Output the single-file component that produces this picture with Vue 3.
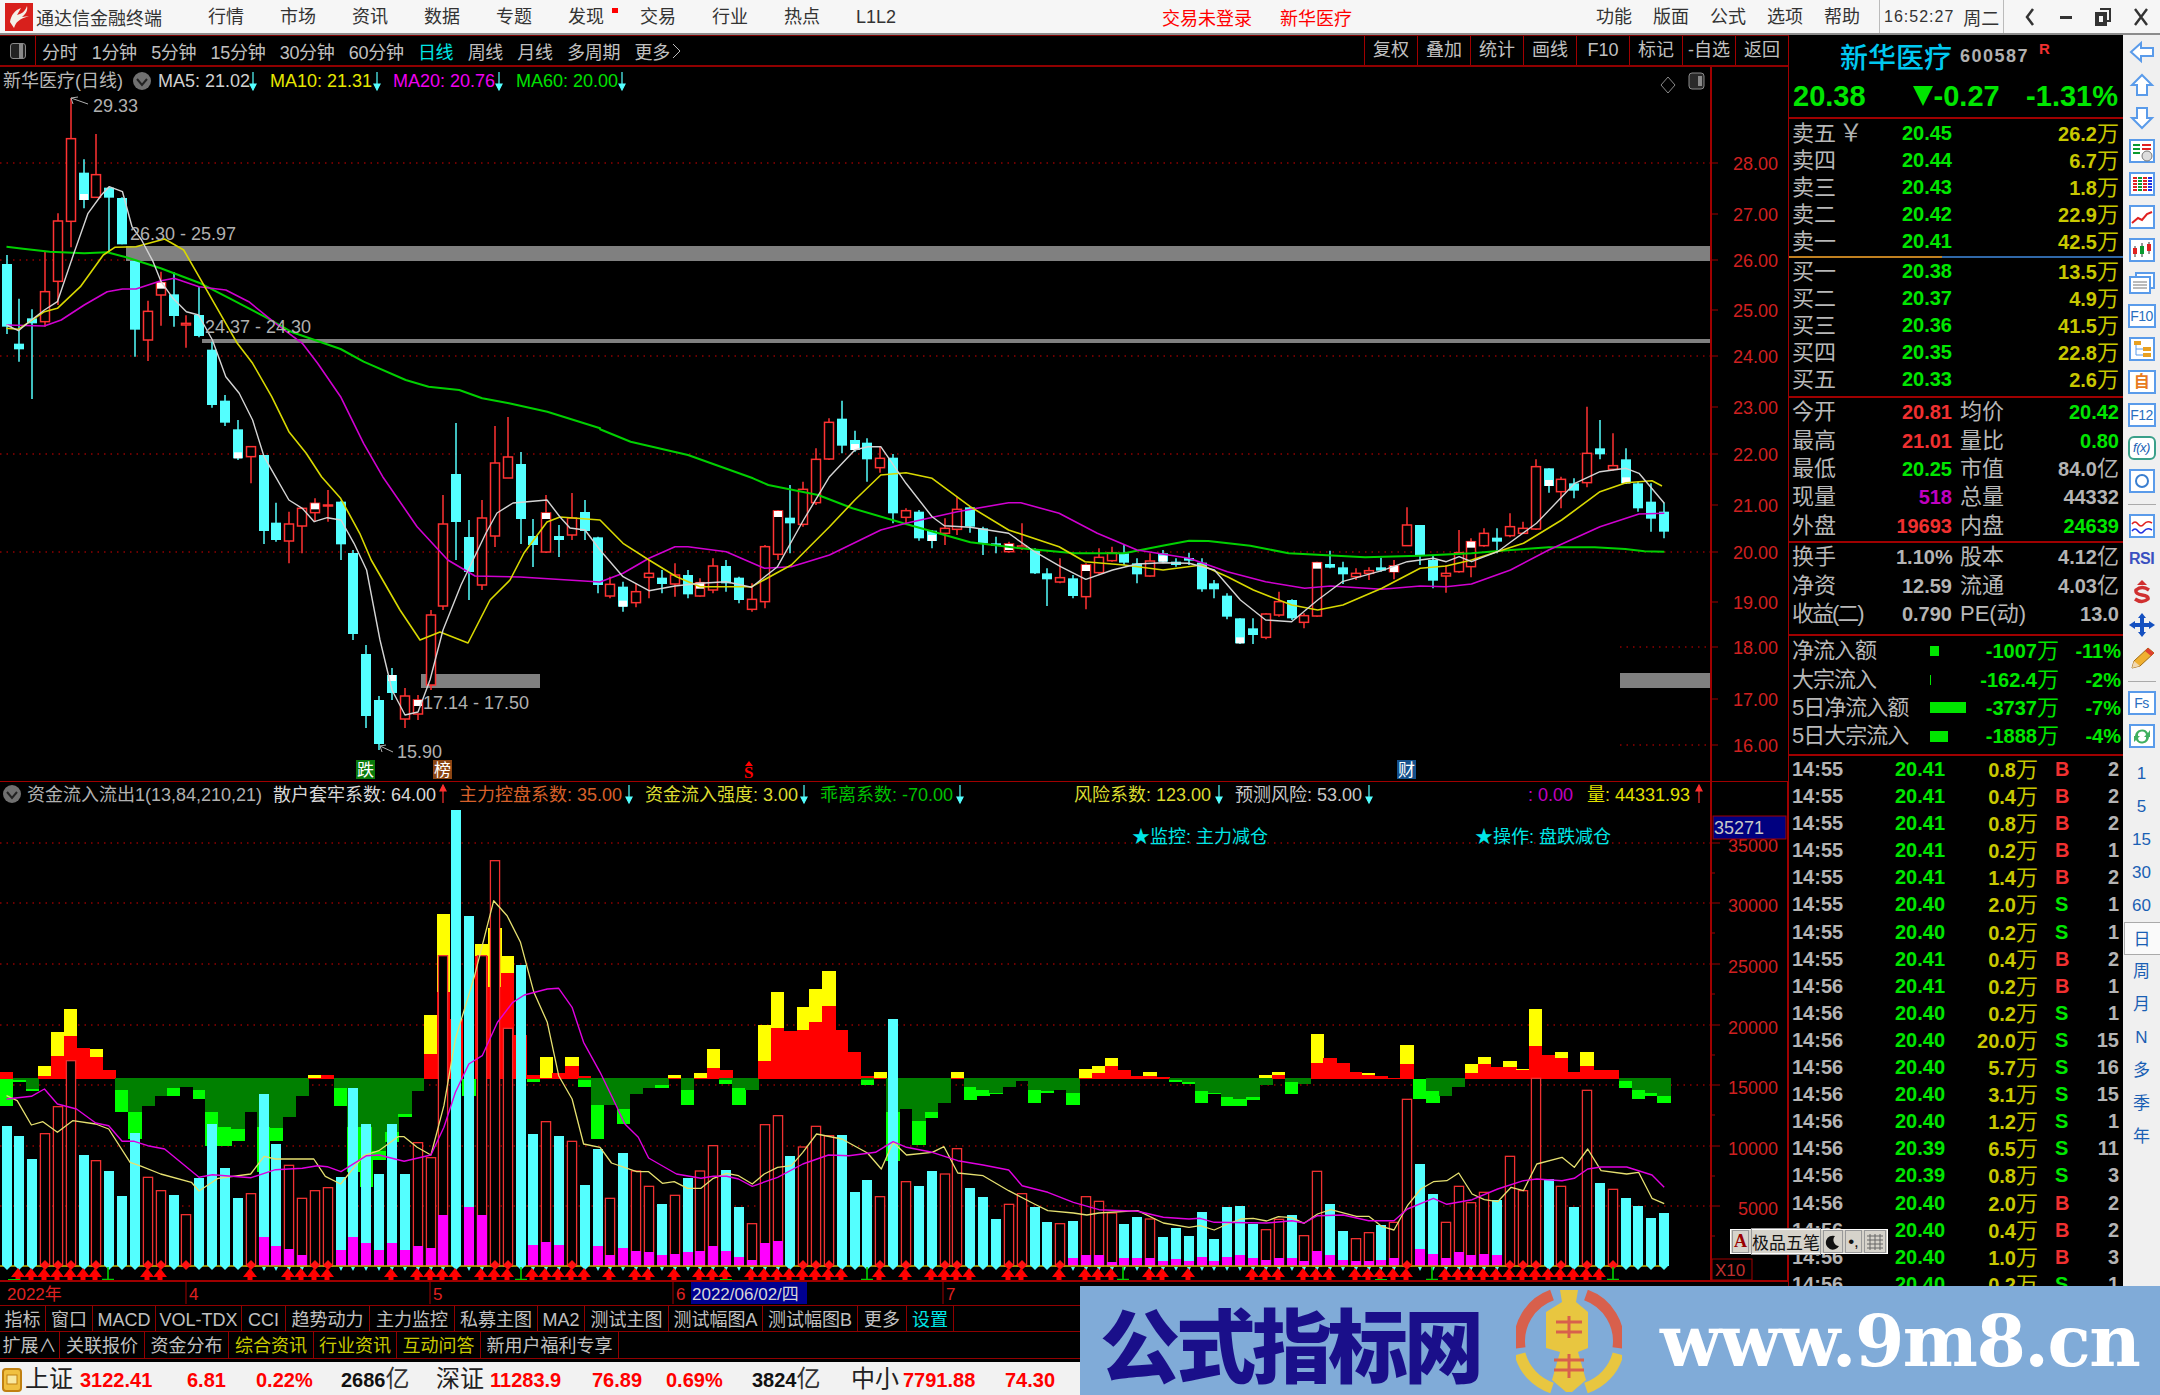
<template>
  <div class="app">
    <div class="menubar">
      <svg class="logo" width="28" height="28" viewBox="0 0 28 28">
        <rect width="28" height="28" fill="#d8201c" />
        <path d="M22 3 C20 9 16 11 12 12 L16 5 C10 7 6 12 5 19 L9 25 C11 19 14 16 24 13 L17 14 C21 11 23 7 22 3 Z" fill="#f4f0e8" />
      </svg>
      <span class="app-title">通达信金融终端</span>
      <nav class="menu">
        <span v-for="m in menu" :key="m" class="menu-item" :class="{ dot: m === '发现' }">{{ m }}</span>
      </nav>
      <div class="login">
        <span>交易未登录</span>
        <span>新华医疗</span>
      </div>
      <nav class="menu right">
        <span v-for="m in menuRight" :key="m" class="menu-item">{{ m }}</span>
      </nav>
      <div class="clock"><span class="time">16:52:27</span><span>周二</span></div>
      <div class="win-btns">
        <svg width="16" height="22" viewBox="0 0 16 22"><path d="M11 3 L5 11 L11 19" fill="none" stroke="#333" stroke-width="2.5" /></svg>
        <svg width="16" height="22" viewBox="0 0 16 22"><rect x="2" y="10" width="12" height="3" fill="#333" /></svg>
        <svg width="18" height="22" viewBox="0 0 18 22"><path d="M6 3 H16 V15 H12 M2 7 H12 V19 H2 Z M4 9 H10 V17 H4 Z" fill="none" stroke="#333" stroke-width="2" /></svg>
        <svg width="18" height="22" viewBox="0 0 18 22"><path d="M3 3 L15 19 M15 3 L3 19" stroke="#333" stroke-width="2.4" /></svg>
      </div>
    </div>

    <div class="body">
      <div class="left">
        <div class="toolbar">
          <span class="tb-icon"><i></i></span>
          <span v-for="t in periods" :key="t" class="period" :class="{ active: t === '日线' }">{{ t }}</span>
          <span class="period more">更多 <svg width="9" height="16" viewBox="0 0 9 16"><path d="M1 1 L8 8 L1 15" fill="none" stroke="#bbb" /></svg></span>
          <span class="spacer"></span>
          <span v-for="t in tools" :key="t" class="tool">{{ t }}</span>
        </div>

        <svg class="chart main-chart" width="1788" height="714" viewBox="0 67 1788 714">
          <line v-for="g in mainGrid" :key="g.y" :x1="g.x" :x2="1710" :y1="g.y" :y2="g.y" class="grid" />
          <rect x="126" y="246" width="1584" height="15" fill="#808080" />
          <rect x="202" y="339" width="1508" height="4" fill="#808080" />
          <rect x="421" y="674" width="119" height="14" fill="#808080" />
          <rect x="1620" y="673" width="90" height="15" fill="#808080" />

          <g v-for="c in candles" :key="c.x">
            <template v-if="c.up">
              <line :x1="c.x" :x2="c.x" :y1="c.high" :y2="c.top" class="wick-r" />
              <line :x1="c.x" :x2="c.x" :y1="c.bot" :y2="c.low" class="wick-r" />
              <rect :x="c.x - 4.5" :y="c.top" width="9" :height="c.h" class="body-r" />
            </template>
            <template v-else>
              <line :x1="c.x" :x2="c.x" :y1="c.high" :y2="c.low" class="wick-c" />
              <rect :x="c.x - 5" :y="c.top" width="10" :height="c.h" class="body-c" />
            </template>
            <rect v-if="c.w" :x="c.x - 4" :y="c.w === 't' ? c.top : c.bot - 6" width="8" height="6" fill="#fff" />
          </g>

          <polyline :points="ma60" class="ln" stroke="#00d000" stroke-width="2" />
          <polyline :points="ma20" class="ln" stroke="#d000d0" stroke-width="1.6" />
          <polyline :points="ma10" class="ln" stroke="#d8d800" stroke-width="1.6" />
          <polyline :points="ma5" class="ln" stroke="#d4d4d4" stroke-width="1.4" />

          <text x="3" y="87" class="t18" fill="#b8b8b8">新华医疗(日线)</text>
          <circle cx="142" cy="81" r="9" fill="#707070" />
          <path d="M137 79 L142 85 L147 79" fill="none" stroke="#222" stroke-width="2" />
          <text v-for="l in mainLegend" :key="l.t" :x="l.x" y="87" class="t18" :fill="l.c">{{ l.t }}</text>
          <path v-for="a in mainArrows" :key="a" :d="arrowDown(a, 72)" class="arr" stroke="#54ffff" fill="#54ffff" />

          <path d="M71 98 L88 104 M71 98 l7 -1 M71 98 l2 6" stroke="#b0b0b0" fill="none" />
          <text x="93" y="112" class="t18" fill="#b0b0b0">29.33</text>
          <text x="130" y="240" class="t18" fill="#b0b0b0">26.30 - 25.97</text>
          <text x="205" y="333" class="t18" fill="#b0b0b0">24.37 - 24.30</text>
          <text x="423" y="709" class="t18" fill="#b0b0b0">17.14 - 17.50</text>
          <path d="M380 746 L393 752 M380 746 l6 -1 M380 746 l2 6" stroke="#b0b0b0" fill="none" />
          <text x="397" y="758" class="t18" fill="#b0b0b0">15.90</text>

          <path d="M1668 77 L1675 85 L1668 93 L1661 85 Z" fill="none" stroke="#8a8a8a" />
          <rect x="1689" y="73" width="15" height="16" rx="3" fill="#2a2a2a" stroke="#8a8a8a" />
          <rect x="1698" y="76" width="4" height="10" fill="#8a8a8a" />

          <rect x="356" y="760" width="19" height="19" fill="#0a7a0a" />
          <text x="357" y="776" class="t17" fill="#fff">跌</text>
          <rect x="433" y="760" width="19" height="19" fill="#8b4513" />
          <text x="434" y="776" class="t17" fill="#fff">榜</text>
          <path d="M749 761 L753 766 H745 Z" fill="#f00" />
          <text x="744" y="778" class="t15b" fill="#f00">S</text>
          <rect x="1397" y="760" width="19" height="19" fill="#14508c" />
          <text x="1398" y="776" class="t17" fill="#fff">财</text>

          <line x1="1711" x2="1711" y1="67" y2="781" class="axis" />
          <g v-for="a in mainAxis" :key="a.t">
            <line x1="1711" x2="1718" :y1="a.tick" :y2="a.tick" stroke="#a00000" />
            <text x="1778" :y="a.y + 7" text-anchor="end" class="t18" fill="#d02020">{{ a.t }}</text>
          </g>
        </svg>

        <svg class="chart ind-chart" width="1788" height="501" viewBox="0 782 1788 501">
          <line x1="0" x2="1788" y1="782" y2="782" stroke="#a00000" stroke-width="2" />
          <line v-for="y in volGrid" :key="y" x1="0" x2="1710" :y1="y" :y2="y" class="grid" />

          <g v-for="(r, i) in flowRects" :key="'f' + i">
            <rect :x="r.x" :y="r.y" width="13.4" :height="r.h" :fill="r.c" shape-rendering="crispEdges" />
          </g>
          <g v-for="b in volBars" :key="b.x">
            <rect v-if="b.up" :x="b.x - 4.6" :y="b.top" width="9.2" :height="1267 - b.top" class="vol-r" />
            <rect v-else :x="b.x - 5" :y="b.top" width="10.2" :height="1267 - b.top" fill="#54ffff" shape-rendering="crispEdges" />
            <rect v-if="b.m" :x="b.x - 5" :y="b.m" width="10.2" :height="1267 - b.m" fill="#ff00ff" shape-rendering="crispEdges" />
          </g>
          <polyline :points="volYellow" class="ln" stroke="#e6e070" stroke-width="1.3" />
          <polyline :points="volMagenta" class="ln" stroke="#e000e0" stroke-width="1.4" />

          <line x1="0" x2="1664" y1="1267" y2="1267" stroke="#c8b400" stroke-width="1.5" />
          <g v-for="b in volBars" :key="'d' + b.x">
            <path v-if="!b.m" :d="`M${b.x} 1261 l5 5 l-5 5 l-5 -5 Z`" :fill="b.up ? '#ff1010' : '#54ffff'" />
            <path v-else :d="`M${b.x - 2} 1268 h4 l-2 4 Z`" fill="#54ffff" />
          </g>
          <path v-for="a in upArrows" :key="a" :d="`M${a} 1269 l7 9 h-4.5 v3 h-5 v-3 h-4.5 Z`" fill="#ff0000" />
          <path v-for="g in greenTees" :key="g" :d="`M${g} 1268 v12 M${g - 6} 1280.5 h12`" stroke="#00d000" stroke-width="1.6" fill="none" />
          <line v-for="g in greenFlats" :key="g" :x1="g - 6" :x2="g + 6" y1="1281" y2="1281" stroke="#00d000" stroke-width="2" />

          <circle cx="12" cy="795" r="9" fill="#707070" />
          <path d="M7 793 L12 799 L17 793" fill="none" stroke="#222" stroke-width="2" />
          <text v-for="l in indLegend" :key="l.t" :x="l.x" y="802" class="t18" :fill="l.c">{{ l.t }}</text>
          <template v-for="a in indArrows" :key="a.x">
            <path :d="a.up ? arrowUp(a.x, 786) : arrowDown(a.x, 786)" class="arr" :stroke="a.c" :fill="a.c" />
          </template>
          <text x="1132" y="844" class="t18" fill="#00e6e6">★监控: 主力减仓</text>
          <text x="1475" y="844" class="t18" fill="#00e6e6">★操作: 盘跌减仓</text>

          <line x1="1711" x2="1711" y1="782" y2="1283" class="axis" />
          <line x1="1788" x2="1788" y1="782" y2="1283" class="axis" />
          <g v-for="a in volAxis" :key="a.t">
            <line x1="1711" x2="1720" :y1="a.y" :y2="a.y" stroke="#a00000" />
            <line x1="1711" x2="1715" :y1="a.y + 30" :y2="a.y + 30" stroke="#a00000" />
            <text x="1778" :y="a.y + 9" text-anchor="end" class="t18" fill="#d02020">{{ a.t }}</text>
          </g>
          <rect x="1713" y="817" width="73" height="23" fill="#000080" stroke="#a00000" />
          <text x="1714" y="835" class="t18" fill="#c8c8c8">35271</text>
          <rect x="1712" y="1260" width="40" height="21" fill="none" stroke="#a00000" />
          <text x="1715" y="1277" class="t17" fill="#c03030">X10</text>
          <line x1="0" x2="1788" y1="1282" y2="1282" stroke="#a00000" stroke-width="2" />
        </svg>

        <svg class="chart date-axis" width="1788" height="23" viewBox="0 1283 1788 23">
          <text x="7" y="1301" class="t17" fill="#e02020">2022年</text>
          <g v-for="d in dateMarks" :key="d.t">
            <line :x1="d.x" :x2="d.x" y1="1283" y2="1305" stroke="#a00000" />
            <text :x="d.x + 3" y="1301" class="t17" fill="#e02020">{{ d.t }}</text>
          </g>
          <rect x="691" y="1283" width="116" height="22" fill="#000090" />
          <text x="692" y="1301" class="t17" fill="#d8d8d8">2022/06/02/四</text>
        </svg>

        <div class="tabs">
          <span v-for="t in tabsOne" :key="t.t" class="tab" :class="t.c" :style="{ width: t.w + 'px' }">{{ t.t }}</span>
        </div>
        <div class="tabs second">
          <span v-for="t in tabsTwo" :key="t.t" class="tab" :class="t.c" :style="{ width: t.w + 'px' }">{{ t.t }}</span>
        </div>
      </div>

      <div class="quote">
        <div class="q-head">
          <div class="q-name">
            <b>新华医疗</b><span class="q-code">600587</span><sup>R</sup>
          </div>
          <div class="q-price">
            <span>20.38</span>
            <span class="q-chg"><svg width="20" height="22" viewBox="0 0 20 22"><path d="M0 1 H20 L10 21 Z" fill="#00e600" /></svg>-0.27</span>
            <span>-1.31%</span>
          </div>
        </div>

        <div class="q-sec sell">
          <div v-for="r in sells" :key="r[0]" class="q-row">
            <span class="cn lbl">{{ r[0] }}</span><span class="n green pr">{{ r[1] }}</span><span class="n olive vol">{{ r[2] }}<em>万</em></span>
          </div>
          <span class="yen">￥</span>
        </div>
        <div class="divider"></div>
        <div class="q-sec buy">
          <div v-for="r in buys" :key="r[0]" class="q-row">
            <span class="cn lbl">{{ r[0] }}</span><span class="n green pr">{{ r[1] }}</span><span class="n olive vol">{{ r[2] }}<em>万</em></span>
          </div>
        </div>

        <div class="q-sec stats">
          <div v-for="r in stats" :key="r[0]" class="s-row">
            <span class="cn">{{ r[0] }}</span><span class="n" :class="r[2]">{{ r[1] }}</span>
            <span class="cn lbl2">{{ r[3] }}</span><span class="n val2" :class="r[5]">{{ r[4] }}<em v-if="r[6]">{{ r[6] }}</em></span>
          </div>
        </div>
        <div class="q-sec stats two">
          <div v-for="r in stats2" :key="r[0]" class="s-row">
            <span class="cn" :class="{ tight: r[0].length > 2 }">{{ r[0] }}</span><span class="n gray">{{ r[1] }}</span>
            <span class="cn lbl2">{{ r[2] }}</span><span class="n val2 gray">{{ r[3] }}<em v-if="r[4]">{{ r[4] }}</em></span>
          </div>
        </div>
        <div class="q-sec flow">
          <div v-for="r in flowRows" :key="r[0]" class="f-row">
            <span class="cn f-lbl">{{ r[0] }}</span>
            <span class="f-track"><i :style="{ width: r[1] + 'px', height: r[2] + 'px' }"></i></span>
            <span class="n green f-val">{{ r[3] }}<em>万</em></span>
            <span class="n green f-pct">{{ r[4] }}</span>
          </div>
        </div>
        <div class="q-sec ticks">
          <div v-for="(r, i) in tickRows" :key="i" class="t-row">
            <span class="n gray t-time">{{ r[0] }}</span>
            <span class="n green t-price">{{ r[1] }}</span>
            <span class="n olive t-vol">{{ r[2] }}<em>万</em></span>
            <span class="n t-side" :class="r[3] === 'B' ? 'red' : 'green'">{{ r[3] }}</span>
            <span class="n gray t-cnt">{{ r[4] }}</span>
          </div>
        </div>
      </div>

      <aside class="sidebar">
        <svg class="ic" viewBox="0 0 28 24"><path d="M3 12 L13 3 V8 H25 V16 H13 V21 Z" fill="#fff" stroke="#5a9bea" stroke-width="2" /></svg>
        <svg class="ic" viewBox="0 0 28 24"><path d="M14 2 L24 12 H19 V22 H9 V12 H4 Z" fill="#fff" stroke="#5a9bea" stroke-width="2" /></svg>
        <svg class="ic" viewBox="0 0 28 24"><path d="M14 22 L24 12 H19 V2 H9 V12 H4 Z" fill="#fff" stroke="#5a9bea" stroke-width="2" /></svg>
        <svg class="ic" viewBox="0 0 28 24"><rect x="2" y="1" width="24" height="22" fill="#fff" stroke="#5a9bea" stroke-width="2" /><path d="M5 6 H12 M5 10 H12 M5 14 H12" stroke="#0a9a30" stroke-width="2" /><path d="M14 6 H23 M14 10 H23" stroke="#e02020" stroke-width="2" /><circle cx="19" cy="17" r="5" fill="#ddd" stroke="#777" /></svg>
        <svg class="ic" viewBox="0 0 28 24"><rect x="2" y="1" width="24" height="22" fill="#fff" stroke="#5a9bea" stroke-width="2" /><path d="M7 5 V19" stroke="#e02020" stroke-width="4" stroke-dasharray="2 1" /><path d="M12 5 V19" stroke="#0a9a30" stroke-width="4" stroke-dasharray="2 1" /><path d="M17 5 V19" stroke="#e02020" stroke-width="4" stroke-dasharray="2 1" /><path d="M22 5 V19" stroke="#2030e0" stroke-width="4" stroke-dasharray="2 1" /></svg>
        <svg class="ic" viewBox="0 0 28 24"><rect x="2" y="1" width="24" height="22" fill="#fff" stroke="#5a9bea" stroke-width="2" /><path d="M4 18 L10 13 L14 15 L19 9 L24 7" fill="none" stroke="#e02020" stroke-width="2" /></svg>
        <svg class="ic" viewBox="0 0 28 24"><rect x="2" y="1" width="24" height="22" fill="#fff" stroke="#5a9bea" stroke-width="2" /><path d="M7 8 V19 M14 5 V19 M21 4 V16" stroke="#333" /><rect x="5" y="10" width="4" height="6" fill="#e02020" /><rect x="12" y="8" width="4" height="8" fill="#0a9a30" /><rect x="19" y="6" width="4" height="7" fill="#e02020" /></svg>
        <svg class="ic" viewBox="0 0 28 24"><rect x="8" y="2" width="18" height="15" fill="#fff" stroke="#5a9bea" stroke-width="2" /><rect x="2" y="6" width="20" height="16" fill="#fff" stroke="#5a9bea" stroke-width="2" /><path d="M5 11 H19 M5 14 H19 M5 17 H19" stroke="#777" /></svg>
        <span class="ib blue">F10</span>
        <svg class="ic" viewBox="0 0 28 24"><rect x="2" y="1" width="24" height="22" fill="#fff" stroke="#5a9bea" stroke-width="2" /><rect x="6" y="4" width="7" height="4" fill="#e8a020" /><rect x="15" y="10" width="8" height="4" fill="#e8a020" /><rect x="15" y="16" width="8" height="4" fill="#e8a020" /><path d="M8 8 V18 H15 M8 12 H15" stroke="#5a9bea" fill="none" /></svg>
        <span class="ib orange">自</span>
        <span class="ib blue">F12</span>
        <span class="ib teal">f(x)</span>
        <svg class="ic" viewBox="0 0 28 24"><rect x="2" y="1" width="24" height="22" fill="#fff" stroke="#5a9bea" stroke-width="2" /><circle cx="14" cy="12" r="6" fill="none" stroke="#3a7fd0" stroke-width="2" /></svg>
        <hr class="sb-sep" />
        <svg class="ic" viewBox="0 0 28 24"><rect x="2" y="1" width="24" height="22" fill="#fff" stroke="#5a9bea" stroke-width="2" /><path d="M4 10 Q7 6 10 10 T16 10 T24 9" fill="none" stroke="#e02020" stroke-width="1.5" /><path d="M4 17 Q7 13 10 17 T16 17 T24 16" fill="none" stroke="#2030e0" stroke-width="1.5" /></svg>
        <span class="ib plain rsi">RSI</span>
        <svg class="ic" viewBox="0 0 28 24"><path d="M14 0 L19 5 H9 Z" fill="#d03030" /><path d="M21 10 Q14 5 8 10 Q7 14 14 15 Q21 16 20 19 Q14 24 7 19" fill="none" stroke="#d03030" stroke-width="3.4" /></svg>
        <svg class="ic" viewBox="0 0 28 24"><path d="M14 0 L18 5 H16 V10 H21 V8 L27 12 L21 16 V14 H16 V19 H18 L14 24 L10 19 H12 V14 H7 V16 L1 12 L7 8 V10 H12 V5 H10 Z" fill="#1450c0" /></svg>
        <svg class="ic" viewBox="0 0 28 24"><path d="M4 22 L6 15 L20 2 L26 7 L12 20 Z" fill="#f0b030" stroke="#a06a10" /><path d="M4 22 L6 15 L12 20 Z" fill="#f0d8b0" /><path d="M20 2 L26 7 L23 10 L17 5 Z" fill="#e04030" /></svg>
        <hr class="sb-sep" />
        <span class="ib blue">Fs</span>
        <svg class="ic" viewBox="0 0 28 24"><rect x="2" y="1" width="24" height="22" fill="#fff" stroke="#5a9bea" stroke-width="2" /><path d="M7 12 A7 7 0 0 1 20 9 L22 6 V13 H16 L18 11 A4 4 0 0 0 10 12 Z M21 13 A7 7 0 0 1 8 16 L6 18 V12 H12 L10 14 A4 4 0 0 0 18 13 Z" fill="#40b060" /></svg>
        <span v-for="n in ['1', '5', '15', '30', '60']" :key="n" class="per">{{ n }}</span>
        <span class="per active">日</span>
        <span v-for="n in ['周', '月', 'N', '多', '季', '年']" :key="n" class="per">{{ n }}</span>
      </aside>
    </div>

    <div class="status">
      <svg class="st-icon" width="20" height="24" viewBox="0 0 20 24"><rect x="1" y="1" width="18" height="22" rx="3" fill="#f0c040" stroke="#c08010" stroke-width="2" /><rect x="5" y="7" width="10" height="9" fill="#f8e8a0" stroke="#c08010" /></svg>
      <span v-for="(s, i) in statusCells" :key="i" class="st-cell" :class="s[2]" :style="{ width: s[1] + 'px' }">{{ s[0] }}<em v-if="s[3]">{{ s[3] }}</em></span>
    </div>

    <div class="ime">
      <span class="ime-a">A</span>
      <span class="ime-name">极品五笔</span>
      <span class="ime-btn">
        <svg width="18" height="18" viewBox="0 0 18 18"><path d="M11 3 A7 7 0 1 0 15 13 A6 6 0 0 1 11 3 Z" fill="#111" /></svg>
      </span>
      <span class="ime-btn small">•,</span>
      <span class="ime-btn">
        <svg width="20" height="18" viewBox="0 0 20 18"><path d="M2 3 H18 M2 7 H18 M2 11 H18 M2 15 H18 M5 1 V17 M10 1 V17 M15 1 V17" stroke="#666" /></svg>
      </span>
    </div>

    <div class="watermark">
      <span class="wm-cn">公式指标网</span>
      <svg class="wm-logo" width="106" height="106" viewBox="0 0 106 106">
        <path d="M4 60 A49 49 0 0 1 36 7" fill="none" stroke="#d8604c" stroke-width="11" />
        <path d="M70 7 A49 49 0 0 1 102 60" fill="none" stroke="#d8604c" stroke-width="11" />
        <path d="M102 66 A49 49 0 0 1 70 100" fill="none" stroke="#e8c640" stroke-width="11" />
        <path d="M4 66 A49 49 0 0 0 36 100" fill="none" stroke="#e8c640" stroke-width="11" />
        <path d="M44 2 H62 L60 14 L72 24 V60 L62 64 L70 92 L56 104 H50 L36 92 L44 64 L30 60 V24 L46 14 Z" fill="#e8c640" />
        <path d="M40 34 H66 M40 44 H66 M53 28 V50 M38 72 H68 M38 82 H68 M53 66 V90" stroke="#d8604c" stroke-width="3" />
      </svg>
      <span class="wm-en">www.9m8.cn</span>
    </div>
  </div>
</template>

<script setup>
const menu = ['行情', '市场', '资讯', '数据', '专题', '发现', '交易', '行业', '热点', 'L1L2']
const menuRight = ['功能', '版面', '公式', '选项', '帮助']
const periods = ['分时', '1分钟', '5分钟', '15分钟', '30分钟', '60分钟', '日线', '周线', '月线', '多周期']
const tools = ['复权', '叠加', '统计', '画线', 'F10', '标记', '-自选', '返回']

const barX = (i) => Math.round(6.5 + 12.85 * i)

// candles: [up, high, top, bottom, low, white mark], read off the chart
const cA = [
  [0, 585, 612, 800, 822], [0, 716, 851, 868, 905], [0, 748, 775, 790, 1017], [1, 575, 695, 785, 800],
  [1, 460, 483, 664, 735], [1, 115, 236, 484, 562], [0, 298, 338, 420, 445, 'b'], [1, 222, 344, 412, 412],
  [0, 380, 383, 413, 575], [0, 412, 414, 553, 553], [0, 600, 603, 809, 890], [1, 722, 754, 840, 903],
  [1, 635, 668, 705, 797, 't'], [0, 637, 703, 768, 800], [1, 766, 790, 795, 863], [0, 680, 765, 828, 832],
  [0, 845, 869, 1035, 1043], [0, 1005, 1022, 1088, 1098], [0, 1080, 1108, 1195, 1200, 'b'], [1, 1160, 1160, 1190, 1270],
  [0, 1185, 1185, 1413, 1452], [0, 1328, 1388, 1440, 1445], [1, 1355, 1392, 1443, 1510], [1, 1345, 1345, 1398, 1480],
  [1, 1315, 1330, 1358, 1385, 't'], [1, 1290, 1335, 1338, 1385], [0, 1322, 1325, 1453, 1500],
]
const cB = [
  [0, 550, 553, 634, 640], [0, 645, 654, 716, 728], [0, 696, 700, 744, 750], [0, 668, 675, 693, 700, 't'],
  [1, 688, 696, 719, 728], [1, 695, 700, 714, 720, 't'], [1, 610, 615, 685, 690], [1, 495, 524, 606, 610],
  [0, 423, 474, 522, 560], [0, 520, 537, 572, 600], [1, 500, 518, 585, 590], [1, 426, 463, 536, 547],
  [1, 417, 457, 478, 478], [0, 452, 464, 519, 544], [0, 519, 536, 545, 567], [1, 495, 513, 552, 553, 't'],
  [0, 525, 536, 540, 557], [1, 493, 518, 535, 540], [0, 500, 512, 531, 540],
]
const cC = [
  [0, 470, 472, 615, 640], [1, 590, 613, 648, 655], [0, 605, 620, 680, 695, 'b'], [1, 610, 635, 668, 682],
  [1, 540, 580, 592, 655], [0, 570, 593, 612, 640], [1, 550, 585, 612, 650], [0, 570, 585, 643, 655],
  [1, 595, 608, 648, 650, 't'], [1, 535, 558, 630, 640], [0, 540, 558, 610, 635], [0, 590, 593, 660, 670],
  [1, 610, 658, 688, 695], [1, 495, 500, 665, 685], [1, 390, 393, 523, 540, 't'], [0, 315, 413, 430, 520],
  [1, 305, 328, 433, 440], [1, 205, 238, 368, 375], [1, 115, 127, 237, 240], [0, 62, 116, 197, 220],
  [0, 152, 180, 210, 215, 'b'], [0, 175, 188, 238, 305], [1, 200, 235, 263, 278], [0, 222, 233, 400, 430],
  [1, 385, 392, 412, 430], [0, 390, 395, 475, 482], [0, 450, 452, 483, 505, 'b'], [1, 415, 445, 460, 495],
  [1, 350, 388, 448, 465], [0, 380, 382, 440, 458], [0, 440, 445, 490, 525], [0, 470, 490, 497, 520],
  [1, 485, 492, 515, 518, 't'], [1, 430, 498, 505, 510], [0, 505, 510, 580, 582], [0, 565, 580, 598, 678],
  [1, 535, 593, 606, 610], [0, 585, 595, 648, 655], [1, 550, 555, 650, 688, 't'], [1, 505, 532, 578, 582],
  [1, 500, 518, 542, 545], [0, 495, 520, 548, 555], [0, 535, 550, 583, 610], [1, 520, 543, 588, 590],
  [0, 510, 520, 545, 550, 'b'], [0, 535, 545, 555, 560], [0, 518, 534, 542, 555], [0, 535, 548, 628, 635],
  [0, 600, 610, 628, 655], [0, 640, 647, 710, 718], [0, 715, 715, 790, 792, 'b'], [0, 715, 745, 765, 792],
  [1, 700, 702, 772, 778], [1, 635, 665, 705, 710], [0, 658, 660, 715, 720], [1, 700, 707, 727, 745],
  [1, 545, 548, 708, 710, 't'], [0, 512, 552, 563, 565], [0, 545, 562, 583, 612], [1, 565, 580, 590, 600],
  [1, 562, 572, 580, 600], [0, 533, 562, 572, 575], [1, 540, 558, 575, 598, 't'], [1, 382, 435, 497, 498],
  [0, 435, 435, 527, 555], [0, 528, 540, 602, 625], [1, 555, 580, 588, 638], [1, 450, 518, 575, 578],
  [1, 475, 485, 560, 592, 't'], [1, 445, 460, 497, 500], [0, 445, 473, 485, 520], [1, 400, 440, 467, 472],
  [1, 425, 445, 460, 462], [1, 238, 260, 447, 450], [0, 265, 265, 318, 338, 'b'], [1, 290, 298, 335, 385],
  [0, 295, 310, 332, 355], [1, 80, 220, 308, 322], [0, 120, 205, 223, 238], [1, 160, 257, 268, 272],
  [0, 205, 238, 310, 312, 'b'], [0, 305, 310, 385, 395], [0, 310, 365, 416, 455], [0, 368, 395, 455, 475],
]
const scaleRow = (row, y0, k) => [row[0], ...row.slice(1, 5).map((v) => y0 + v / k), row[5]]
const candles = [
  ...cA.map((r) => scaleRow(r, 60, 3)),
  ...cB.map((r) => scaleRow(r, 0, 1)),
  ...cC.map((r) => scaleRow(r, 380, 3)),
].map((r, i) => ({
  x: barX(i), up: !!r[0], high: r[1], top: r[2], bot: r[3], low: r[4], h: r[3] - r[2], w: r[5],
}))

// line points, mixed from the three read-outs of the chart
const from7 = (p) => p.map(([x, y]) => [x / 2.613, 60 + y / 3])
const from12 = (p) => p.map(([x, y]) => [600 + x / 1.307, 380 + y / 3])
const pts = (p) => p.map(([x, y]) => `${x.toFixed(1)},${y.toFixed(1)}`).join(' ')

const ma5 = pts([
  ...from7([[17, 795], [48, 812], [82, 780], [116, 750], [150, 725], [190, 590], [230, 460], [265, 405], [285, 380], [320, 395], [345, 500], [370, 540], [400, 605], [421, 665], [452, 715], [487, 755], [519, 765], [555, 840], [590, 950], [625, 1000], [660, 1080], [690, 1190], [720, 1250], [755, 1320], [790, 1345], [821, 1385], [855, 1373], [891, 1380], [925, 1450], [958, 1530]]),
  [380, 640], [392, 690], [405, 715], [418, 712], [430, 680], [443, 630], [461, 585], [486, 533], [497, 513], [513, 503], [547, 500], [560, 517], [570, 528], [585, 530], [600, 550],
  ...from12([[30, 590], [64, 632], [98, 618], [131, 610], [165, 605], [198, 622], [232, 560], [266, 420], [300, 290], [333, 210], [350, 200], [367, 200], [400, 310], [434, 410], [450, 437], [484, 442], [534, 460], [568, 515], [602, 560], [635, 598], [670, 570], [702, 552], [736, 548], [770, 550], [803, 570], [837, 660], [870, 720], [904, 725], [938, 660], [970, 605], [1022, 572], [1055, 545], [1089, 535], [1106, 545], [1123, 530], [1139, 545], [1173, 515], [1224, 430], [1274, 310], [1307, 275], [1341, 265], [1358, 280], [1391, 370]]),
])
const ma10 = pts([
  ...from7([[17, 805], [48, 808], [116, 755], [150, 745], [210, 680], [270, 585], [300, 562], [355, 560], [430, 537], [480, 570], [520, 650], [560, 730], [620, 850], [660, 910], [710, 1010], [755, 1115], [800, 1180], [840, 1250], [890, 1315], [940, 1420], [970, 1500]]),
  [400, 610], [420, 640], [440, 632], [468, 643], [490, 600], [510, 580], [524, 553], [547, 522], [560, 517], [600, 520],
  ...from12([[30, 490], [64, 540], [100, 590], [131, 620], [198, 620], [250, 555], [300, 440], [333, 360], [367, 285], [400, 278], [434, 295], [484, 380], [534, 450], [600, 500], [634, 545], [685, 555], [736, 570], [786, 555], [820, 590], [854, 630], [904, 675], [938, 690], [971, 675], [1022, 625], [1072, 565], [1106, 558], [1139, 540], [1207, 490], [1257, 420], [1307, 335], [1341, 308], [1375, 302], [1388, 318]]),
])
const ma20 = pts([
  ...from7([[17, 795], [116, 798], [160, 780], [220, 735], [280, 695], [320, 687], [355, 687], [421, 662], [455, 655], [520, 680], [590, 690], [650, 725], [720, 790], [790, 850], [830, 910], [890, 1010], [950, 1150], [1000, 1250], [1090, 1400], [1170, 1500]]),
  [475, 576], [520, 577], [600, 582],
  ...from12([[30, 580], [64, 535], [98, 500], [115, 500], [165, 515], [215, 565], [250, 560], [300, 525], [367, 450], [400, 430], [467, 395], [534, 368], [550, 368], [600, 400], [650, 460], [702, 510], [770, 535], [820, 575], [870, 605], [921, 625], [955, 618], [1022, 628], [1072, 618], [1106, 620], [1139, 612], [1190, 570], [1240, 510], [1307, 440], [1358, 402], [1391, 400]]),
])
const ma60 = pts([
  ...from7([[17, 560], [60, 566], [130, 575], [220, 580], [280, 577], [330, 592], [420, 625], [520, 668], [600, 715], [700, 775], [760, 815], [890, 867], [950, 905], [1060, 960], [1120, 980], [1200, 990], [1260, 1015], [1330, 1030], [1430, 1055], [1568, 1105]]),
  ...from12([[0, 148], [40, 185], [115, 225], [200, 295], [220, 315], [285, 345], [330, 385], [400, 432], [484, 487], [550, 505], [620, 520], [685, 520], [735, 497], [770, 482], [795, 483], [850, 497], [900, 520], [1000, 532], [1072, 527], [1139, 520], [1190, 510], [1240, 502], [1300, 502], [1340, 507], [1365, 514], [1391, 515]]),
])

const mainGrid = [
  { y: 163, x: 0 }, { y: 260, x: 0 }, { y: 356, x: 0 }, { y: 454, x: 0 }, { y: 552, x: 0 }, { y: 647, x: 1620 }, { y: 745, x: 1620 },
]
const mainAxis = [
  ['28.00', 163], ['27.00', 214], ['26.00', 260], ['25.00', 310], ['24.00', 356], ['23.00', 407], ['22.00', 454],
  ['21.00', 505], ['20.00', 552], ['19.00', 602], ['18.00', 647], ['17.00', 699], ['16.00', 745],
].map(([t, y]) => ({ t, y, tick: y }))
const mainLegend = [
  { x: 158, t: 'MA5: 21.02', c: '#d0d0d0' }, { x: 270, t: 'MA10: 21.31', c: '#e8e800' },
  { x: 393, t: 'MA20: 20.76', c: '#f000f0' }, { x: 516, t: 'MA60: 20.00', c: '#00e000' },
]
const mainArrows = [253, 377, 499, 622]
const arrowDown = (x, y) => `M${x} ${y} V${y + 13} M${x - 3} ${y + 12} H${x + 3} L${x} ${y + 18} Z`
const arrowUp = (x, y) => `M${x} ${y + 18} V${y + 5} M${x - 3} ${y + 6} H${x + 3} L${x} ${y} Z`

const indLegend = [
  { x: 27, t: '资金流入流出1(13,84,210,21)', c: '#b0b0b0' }, { x: 273, t: '散户套牢系数: 64.00', c: '#d8d8d8' },
  { x: 459, t: '主力控盘系数: 35.00', c: '#d8602a' }, { x: 645, t: '资金流入强度: 3.00', c: '#dcdc30' },
  { x: 820, t: '乖离系数: -70.00', c: '#00c000' }, { x: 1074, t: '风险系数: 123.00', c: '#dcdc30' },
  { x: 1235, t: '预测风险: 53.00', c: '#c8c8c8' }, { x: 1528, t: ': 0.00', c: '#c000c0' }, { x: 1587, t: '量: 44331.93', c: '#e0e000' },
]
const indArrows = [
  { x: 443, c: '#ff3030', up: true }, { x: 629, c: '#54ffff' }, { x: 804, c: '#54ffff' }, { x: 960, c: '#54ffff' },
  { x: 1219, c: '#54ffff' }, { x: 1369, c: '#54ffff' }, { x: 1699, c: '#ff3030', up: true },
]

// volume bars: [up, top, magenta top], top in crop rows (760 + y / 3)
const vol = [
  [0, 1100], [0, 1132], [0, 1200], [1, 1124], [1, 1043], [1, 905], [0, 1187], [1, 1205], [0, 1236], [0, 1312],
  [0, 1123], [1, 1255], [1, 1295], [0, 1307], [1, 1367], [0, 1258], [0, 1096], [0, 1226], [0, 1316], [1, 1304],
  [0, 1006, 1434], [0, 1155, 1461], [1, 1219, 1470], [1, 1318, 1488], [1, 1295], [1, 1286], [0, 1254, 1474], [0, 988, 1434], [0, 1096, 1452], [0, 1245, 1474],
  [0, 1096, 1452], [0, 1245, 1474], [1, 1151, 1461], [1, 1196, 1466], [1, 590, 1367], [0, 152], [0, 470, 1344], [1, 590, 1367], [1, 305], [1, 808],
  [0, 619], [0, 1124, 1457], [1, 1088, 1448], [0, 1132, 1457], [1, 1147], [0, 1277], [0, 1169, 1461], [1, 1318, 1488], [0, 1182, 1466], [1, 1236, 1475],
  [1, 1282, 1480], [0, 1335, 1488], [1, 1309, 1484], [0, 1258, 1479], [1, 1236, 1475], [1, 1160, 1461], [0, 1232, 1475], [0, 1344, 1493], [1, 1394, 1502], [1, 1097, 1452],
  [1, 1070, 1447], [0, 1191], [1, 1164], [1, 1102], [1, 1130], [0, 1128], [0, 1299], [0, 1263], [1, 1313], [0, 781],
  [1, 1268], [0, 1281], [0, 1236], [1, 1245], [1, 1169], [0, 1286], [0, 1313], [0, 1380], [1, 1336], [1, 1304],
  [0, 1344], [0, 1389], [1, 1394], [0, 1385, 1497], [1, 1313, 1488], [1, 1327, 1488], [1, 1362, 1510], [0, 1394, 1497], [0, 1375, 1497], [1, 1380, 1497],
  [0, 1434, 1506], [0, 1407, 1501], [0, 1430, 1506], [0, 1358, 1493], [0, 1439, 1506], [0, 1344, 1493], [0, 1340, 1488], [0, 1394, 1497], [1, 1412, 1502], [1, 1381, 1497],
  [0, 1367, 1497], [1, 1430, 1506], [1, 1237, 1475], [0, 1335, 1488], [0, 1416, 1502], [1, 1439, 1506], [1, 1421, 1506], [0, 1398, 1502], [1, 1390, 1497], [1, 1021],
  [0, 1214, 1470], [0, 1304, 1484], [1, 1390, 1497], [1, 1282, 1479], [1, 1331, 1488], [1, 1300, 1484], [0, 1322, 1488], [1, 1192], [1, 1295], [1, 958],
  [0, 1259], [1, 1282], [0, 1344], [1, 994], [0, 1272], [1, 1291], [0, 1317], [0, 1340], [0, 1376], [0, 1362],
]
const vy = (z) => 760 + z / 3
const volBars = vol.map((v, i) => ({ x: barX(i), up: !!v[0], top: vy(v[1]), m: v[2] ? vy(v[2]) : 0 }))

// money flow steps: [yellow top, red top, dark bottom, bright bottom]
const flow = [
  [0, 938, 960, 1042], [0, 958, 962, 968], [0, 0, 990, 996], [920, 952], [818, 890], [750, 830], [0, 866], [870, 893], [0, 934], [0, 0, 992, 1060],
  [0, 0, 1060, 1140], [0, 0, 1042], [0, 0, 1010], [0, 0, 988, 1010], [0, 0, 984], [0, 0, 992, 1019], [0, 0, 1060, 1162], [0, 0, 1105, 1162], [0, 0, 1110, 1145], [0, 0, 1060],
  [0, 0, 1105, 1240], [0, 0, 1108, 1145], [0, 0, 1073], [0, 0, 1010], [947, 957], [0, 947], [0, 0, 988, 1042], [0, 0, 1105, 1240], [0, 0, 1105, 1284], [0, 0, 1176, 1203],
  [0, 0, 1120, 1150], [0, 0, 1065, 1073], [0, 0, 996], [768, 885], [466, 700], [0, 780], [0, 0, 960, 1010], [556, 590], [506, 685], [592, 642],
  [0, 828], [0, 948, 960, 970], [893, 957], [0, 943], [893, 921], [0, 952, 962, 984], [0, 0, 1037, 1140], [0, 0, 1037], [0, 0, 1050, 1096], [0, 0, 1005],
  [0, 0, 988], [0, 0, 979, 988], [947, 957], [0, 0, 992, 1037], [943, 957], [871, 926], [0, 934, 962, 974], [0, 0, 988, 1037], [0, 0, 992], [799, 907],
  [700, 808], [0, 817], [745, 812], [691, 790], [637, 740], [0, 812], [0, 880], [0, 952, 962, 979], [938, 957], [0, 0, 1060, 1205],
  [0, 0, 1050], [0, 0, 1086, 1158], [0, 0, 1060, 1078], [0, 0, 1032], [938, 957], [0, 0, 984, 1024], [0, 0, 992, 1010], [0, 0, 1001, 1005], [0, 0, 984], [0, 0, 965],
  [0, 0, 992, 1032], [0, 0, 996, 1001], [0, 0, 992], [0, 0, 1001, 1037], [929, 957], [920, 943], [898, 920], [0, 934], [0, 952], [938, 952],
  [0, 955], [0, 0, 962, 970], [0, 0, 968, 974], [0, 0, 996, 1032], [0, 0, 1001, 1005], [0, 0, 1014, 1041], [0, 0, 1019, 1041], [0, 0, 1014, 1023], [947, 956, 978], [938, 947],
  [0, 0, 970, 1005], [0, 0, 974], [826, 911], [0, 898], [0, 911], [0, 938], [943, 948], [0, 952], [0, 957], [857, 916],
  [0, 0, 960, 1019], [0, 0, 997, 1032], [0, 0, 1010], [0, 0, 983], [916, 943], [893, 916], [0, 925], [907, 925], [929, 934], [749, 862],
  [0, 889], [880, 898], [0, 938], [880, 920], [0, 934], [0, 934], [0, 0, 965, 988], [0, 0, 992, 1019], [0, 0, 1001, 1010], [0, 0, 1010, 1032],
]
const flowRects = []
flow.forEach(([yt = 0, rt = 0, db = 0, bb = 0], i) => {
  const x = 6.5 + 12.85 * i - 6.7
  const add = (a, b, c) => flowRects.push({ x, y: vy(a), h: (b - a) / 3, c })
  if (rt) add(rt, 960, '#ff0000')
  if (yt) add(yt, rt || 957, '#ffff00')
  if (db > 960) add(958, db, '#008000')
  if (bb) add(db, bb, '#00ff00')
})

const from8 = (off, p) => p.map(([x, y]) => [off + x / 2.613, 760 + y / 3])
const volYellow = pts([
  ...from8(0, [[17, 1010], [45, 1025], [82, 1098], [112, 1088], [150, 1120], [190, 1085], [250, 1095], [284, 1110], [340, 1210], [370, 1222], [420, 1245], [500, 1270], [520, 1296], [570, 1258], [655, 1245], [690, 1192], [720, 1200], [820, 1200], [850, 1252], [890, 1275], [950, 1190], [990, 1175], [1040, 1133], [1056, 1133], [1090, 1165], [1126, 1188], [1160, 1040], [1190, 840], [1240, 650], [1290, 425], [1325, 470], [1360, 550], [1395, 700], [1430, 790], [1460, 950], [1495, 1020], [1525, 1155], [1568, 1165]]),
  ...from8(600, [[30, 1212], [96, 1238], [127, 1238], [163, 1273], [194, 1268], [229, 1288], [264, 1288], [296, 1258], [331, 1243], [362, 1250], [398, 1275], [429, 1245], [464, 1225], [500, 1220], [530, 1180], [566, 1125], [632, 1140], [699, 1182], [735, 1230], [766, 1150], [801, 1188], [868, 1180], [899, 1163], [935, 1242], [1001, 1250], [1068, 1295], [1135, 1335], [1170, 1355], [1237, 1362], [1272, 1368], [1304, 1362], [1405, 1355], [1472, 1392], [1539, 1405], [1568, 1400]]),
  ...from8(1200, [[37, 1413], [72, 1395], [107, 1380], [139, 1378], [174, 1386], [205, 1373], [240, 1376], [272, 1393], [307, 1365], [342, 1352], [409, 1372], [441, 1372], [476, 1403], [507, 1413], [542, 1340], [577, 1290], [610, 1268], [645, 1265], [676, 1242], [711, 1305], [743, 1322], [778, 1328], [813, 1285], [845, 1295], [880, 1215], [946, 1195], [978, 1225], [1013, 1170], [1048, 1235], [1115, 1245], [1146, 1240], [1181, 1318], [1213, 1334]]),
])
const volMagenta = pts([
  ...from8(0, [[17, 1020], [82, 1012], [116, 990], [150, 1035], [200, 1050], [250, 1092], [284, 1100], [319, 1147], [351, 1147], [386, 1160], [430, 1170], [520, 1255], [555, 1247], [656, 1256], [720, 1232], [790, 1228], [830, 1220], [855, 1223], [891, 1238], [958, 1190], [990, 1188], [1056, 1207], [1126, 1188], [1160, 1105], [1190, 1000], [1225, 915], [1260, 890], [1300, 790], [1340, 730], [1370, 708], [1430, 690], [1460, 688], [1495, 745], [1525, 850], [1568, 940]]),
  ...from8(600, [[30, 1010], [65, 1095], [100, 1135], [127, 1197], [200, 1245], [264, 1258], [296, 1252], [331, 1252], [362, 1260], [398, 1282], [464, 1255], [530, 1215], [597, 1188], [650, 1190], [720, 1180], [766, 1148], [801, 1165], [868, 1180], [935, 1205], [1001, 1218], [1068, 1233], [1103, 1280], [1170, 1300], [1237, 1330], [1304, 1352], [1405, 1357], [1472, 1375], [1539, 1380], [1568, 1378]]),
  ...from8(1200, [[37, 1390], [174, 1392], [240, 1385], [272, 1392], [307, 1370], [374, 1368], [441, 1385], [507, 1385], [542, 1350], [610, 1318], [645, 1336], [711, 1322], [778, 1290], [845, 1265], [880, 1260], [946, 1265], [978, 1258], [1013, 1230], [1048, 1224], [1115, 1224], [1181, 1248], [1213, 1285]]),
])

const arrowIdx = [2, 3, 4, 5, 6, 7, 8, 12, 13, 20, 23, 24, 25, 26, 31, 33, 34, 35, 36, 38, 39, 40, 42, 43, 44, 45, 46, 48, 50, 51, 53, 55, 56, 57, 59, 60, 61, 62, 63, 64, 65, 66, 69, 71, 73, 74, 75, 76, 79, 80, 83, 85, 86, 87, 90, 91, 93, 98, 99, 100, 102, 103, 104, 106, 107, 108, 109, 110, 113, 114, 115, 116, 117, 118, 119, 120, 121, 122, 123, 124, 125]
const upArrows = arrowIdx.map((n) => barX(n - 1) - 1)
const greenTees = [108, 521, 867, 1123, 1432, 1613]
const greenFlats = [14, 726, 1381]

const volGrid = [844, 904, 965, 1026, 1086, 1147, 1207]
const volAxis = [
  ['35000', 844], ['30000', 904], ['25000', 965], ['20000', 1026], ['15000', 1086], ['10000', 1147], ['5000', 1207],
].map(([t, y]) => ({ t, y }))
const dateMarks = [{ t: '4', x: 186 }, { t: '5', x: 430 }, { t: '6', x: 673 }, { t: '7', x: 943 }]

const tabsOne = [
  ['指标', 46], ['窗口', 47], ['MACD', 63], ['VOL-TDX', 86], ['CCI', 44], ['趋势动力', 84], ['主力监控', 85], ['私募主图', 83],
  ['MA2', 47], ['测试主图', 84], ['测试幅图A', 94], ['测试幅图B', 95], ['更多', 49], ['设置', 47, 'cy'],
].map(([t, w, c]) => ({ t, w, c }))
const tabsTwo = [
  ['扩展∧', 60], ['关联报价', 85], ['资金分布', 84], ['综合资讯', 85, 'ol'], ['行业资讯', 83, 'ol'], ['互动问答', 84, 'ol'], ['新用户福利专享', 138],
].map(([t, w, c]) => ({ t, w, c }))

const sells = [['卖五', '20.45', '26.2'], ['卖四', '20.44', '6.7'], ['卖三', '20.43', '1.8'], ['卖二', '20.42', '22.9'], ['卖一', '20.41', '42.5']]
const buys = [['买一', '20.38', '13.5'], ['买二', '20.37', '4.9'], ['买三', '20.36', '41.5'], ['买四', '20.35', '22.8'], ['买五', '20.33', '2.6']]
const stats = [
  ['今开', '20.81', 'red', '均价', '20.42', 'green'],
  ['最高', '21.01', 'red', '量比', '0.80', 'green'],
  ['最低', '20.25', 'green', '市值', '84.0', 'gray', '亿'],
  ['现量', '518', 'purple', '总量', '44332', 'gray'],
  ['外盘', '19693', 'red', '内盘', '24639', 'green'],
]
const stats2 = [
  ['换手', '1.10%', '股本', '4.12', '亿'],
  ['净资', '12.59', '流通', '4.03', '亿'],
  ['收益(二)', '0.790', 'PE(动)', '13.0'],
]
const flowRows = [
  ['净流入额', 9, 10, '-1007', '-11%'],
  ['大宗流入', 1, 10, '-162.4', '-2%'],
  ['5日净流入额', 36, 11, '-3737', '-7%'],
  ['5日大宗流入', 18, 11, '-1888', '-4%'],
]
const tickRows = [
  ['14:55', '20.41', '0.8', 'B', 2], ['14:55', '20.41', '0.4', 'B', 2], ['14:55', '20.41', '0.8', 'B', 2], ['14:55', '20.41', '0.2', 'B', 1],
  ['14:55', '20.41', '1.4', 'B', 2], ['14:55', '20.40', '2.0', 'S', 1], ['14:55', '20.40', '0.2', 'S', 1], ['14:55', '20.41', '0.4', 'B', 2],
  ['14:56', '20.41', '0.2', 'B', 1], ['14:56', '20.40', '0.2', 'S', 1], ['14:56', '20.40', '20.0', 'S', 15], ['14:56', '20.40', '5.7', 'S', 16],
  ['14:56', '20.40', '3.1', 'S', 15], ['14:56', '20.40', '1.2', 'S', 1], ['14:56', '20.39', '6.5', 'S', 11], ['14:56', '20.39', '0.8', 'S', 3],
  ['14:56', '20.40', '2.0', 'B', 2], ['14:56', '20.40', '0.4', 'B', 2], ['14:56', '20.40', '1.0', 'B', 3], ['14:56', '20.40', '0.2', 'S', 1],
]

const statusCells = [
  ['上证', 55, 'lab'], ['3122.41', 107, 'up'], ['6.81', 69, 'up'], ['0.22%', 85, 'up'], ['2686', 95, 'amt', '亿'],
  ['深证', 54, 'lab'], ['11283.9', 102, 'up'], ['76.89', 74, 'up'], ['0.69%', 86, 'up'], ['3824', 99, 'amt', '亿'],
  ['中小', 52, 'lab'], ['7791.88', 102, 'up'], ['74.30', 70, 'up'],
]
</script>

<style scoped>
.app {
  position: relative;
  width: 2160px;
  height: 1395px;
  overflow: hidden;
  display: flex;
  flex-direction: column;
  background: #000;
  font-family: "Liberation Sans", "Noto Sans CJK SC", sans-serif;
  color: #c0c0c0;
}
.menubar {
  height: 33px;
  flex: none;
  display: flex;
  align-items: center;
  background: #f6f6f6;
  color: #333;
  font-size: 18px;
  border-bottom: 2px solid #8c8c8c;
}
.logo {
  margin: 0 3px 0 5px;
}
.app-title {
  width: 172px;
}
.menu {
  display: flex;
  gap: 36px;
  align-items: center;
}
.menu-item {
  width: 36px;
  position: relative;
  white-space: nowrap;
  line-height: 26px;
}
.dot::after {
  content: "";
  position: absolute;
  left: 44px;
  top: 4px;
  width: 6px;
  height: 5px;
  background: #f00;
}
.login {
  margin-left: 270px;
  display: flex;
  gap: 28px;
  color: #f00;
}
.menu.right {
  gap: 21px;
  margin-left: 244px;
}
.clock {
  display: flex;
  gap: 9px;
  align-items: center;
  margin-left: 19px;
  padding: 0 4px 0 4px;
  height: 33px;
  border-left: 1px solid #bbb;
  border-right: 1px solid #bbb;
}
.time {
  font-size: 16px;
  letter-spacing: 1px;
}
.win-btns {
  display: flex;
  gap: 20px;
  margin-left: 18px;
  align-items: center;
}
.body {
  height: 1327px;
  flex: none;
  display: flex;
  background: #000;
}
.left {
  width: 1788px;
  flex: none;
}
.toolbar {
  display: flex;
  align-items: center;
  border-top: 1px solid #800000;
  border-bottom: 2px solid #900000;
  box-sizing: content-box;
  height: 29px;
  font-size: 18px;
}
.tb-icon {
  width: 35px;
  height: 29px;
  display: flex;
  align-items: center;
  justify-content: center;
  border-right: 1px solid #a00000;
  margin-right: 6px;
}
.tb-icon i {
  width: 14px;
  height: 14px;
  border: 1.5px solid #8a8a8a;
  border-radius: 3px;
  background: linear-gradient(90deg, #222 55%, #8a8a8a 55%, #8a8a8a 85%, #222 85%);
}
.period {
  margin-right: 14.3px;
  white-space: nowrap;
  letter-spacing: -0.3px;
}
.period.active {
  color: #00e6e6;
}
.more {
  display: flex;
  align-items: center;
  gap: 2px;
}
.spacer {
  flex: 1;
}
.tool {
  width: 52px;
  height: 29px;
  line-height: 29px;
  text-align: center;
  border-left: 1px solid #a00000;
  white-space: nowrap;
}
.chart {
  display: block;
  background: #000;
}
.t18 {
  font-size: 18px;
}
.t17 {
  font-size: 17px;
}
.t15b {
  font-size: 17px;
  font-weight: 700;
  font-family: "Liberation Serif", serif;
}
.grid {
  stroke: #900000;
  stroke-width: 1.5;
  stroke-dasharray: 1.5 5;
}
.axis {
  stroke: #a00000;
  stroke-width: 2;
}
.wick-r {
  stroke: #ff3232;
  stroke-width: 1.5;
}
.wick-c {
  stroke: #54ffff;
  stroke-width: 1.5;
}
.body-r {
  fill: #000;
  stroke: #ff3232;
  stroke-width: 1.5;
}
.body-c {
  fill: #54ffff;
}
.vol-r {
  fill: #000;
  stroke: #f03030;
  stroke-width: 1.3;
}
.ln {
  fill: none;
  stroke-linejoin: round;
}
.arr {
  stroke-width: 1.2;
}
.tabs {
  height: 25px;
  display: flex;
  border-top: 1px solid #900000;
  border-bottom: 1px solid #900000;
  font-size: 18px;
  line-height: 28px;
}
.tabs.second {
  height: 26px;
  line-height: 29px;
  border-top: none;
}
.tab {
  flex: none;
  text-align: center;
  white-space: nowrap;
  overflow: hidden;
  border-right: 1px solid #900000;
  box-sizing: border-box;
}
.tab.cy {
  color: #00e6e6;
}
.tab.ol {
  color: #c8c800;
}
.quote {
  width: 335px;
  flex: none;
  height: 1327px;
  overflow: hidden;
  border-left: 1px solid #a00000;
  box-sizing: border-box;
}
.q-head {
  height: 84px;
  border-bottom: 2px solid #a00000;
  box-sizing: border-box;
}
.q-name {
  height: 42px;
  display: flex;
  align-items: center;
  padding-left: 51px;
}
.q-name b {
  font-size: 28px;
  font-weight: 500;
  color: #00c8f0;
}
.q-code {
  margin-left: 8px;
  font-size: 18px;
  font-weight: 700;
  color: #b0b0b0;
  letter-spacing: 1.5px;
}
.q-name sup {
  margin: -16px 0 0 10px;
  font-size: 15px;
  font-weight: 700;
  color: #f03030;
}
.q-price {
  display: flex;
  font-size: 29px;
  font-weight: 700;
  color: #00e600;
  padding: 0 5px 0 4px;
  line-height: 38px;
  height: 38px;
}
.q-chg {
  margin-left: 47px;
  margin-right: auto;
  display: flex;
  align-items: center;
  gap: 1px;
}
.q-sec {
  overflow: hidden;
  position: relative;
}
.sell {
  height: 137px;
  padding-top: 1px;
  box-sizing: border-box;
}
.divider {
  height: 2px;
  background: linear-gradient(90deg, #c08020 0 153px, #3068a8 153px);
}
.buy {
  height: 140px;
  border-bottom: 2px solid #a00000;
  box-sizing: border-box;
}
.yen {
  position: absolute;
  left: 50px;
  top: 0;
  font-size: 24px;
  line-height: 28px;
  color: #b0b0b0;
}
.q-row {
  height: 27.1px;
  line-height: 27px;
  display: grid;
  grid-template-columns: 104px 56px 1fr;
  padding: 0 4px 0 3px;
}
.cn {
  font-size: 22px;
  color: #b8b8b8;
  white-space: nowrap;
}
.cn.tight {
  letter-spacing: -2px;
}
.n {
  font-size: 20px;
  font-weight: 700;
  white-space: nowrap;
}
.n em,
.st-cell em {
  font-style: normal;
  font-weight: 400;
  font-size: 22px;
}
.pr {
  text-align: right;
}
.vol {
  text-align: right;
}
.green {
  color: #00e600;
}
.olive {
  color: #c8c800;
}
.red {
  color: #f03030;
}
.gray {
  color: #b4b4b4;
}
.purple {
  color: #c000c0;
}
.stats {
  height: 145px;
  border-bottom: 2px solid #a00000;
  box-sizing: border-box;
}
.stats.two {
  height: 93px;
}
.s-row {
  height: 28.4px;
  line-height: 28px;
  display: grid;
  grid-template-columns: 104px 56px 8px 52px 1fr;
  padding: 0 4px 0 3px;
  align-items: center;
}
.s-row .n {
  text-align: right;
}
.lbl2 {
  grid-column: 4;
  overflow: visible;
}
.flow {
  height: 120px;
  padding-top: 1px;
  border-bottom: 2px solid #a00000;
  box-sizing: border-box;
}
.f-row {
  height: 28.4px;
  line-height: 28px;
  display: grid;
  grid-template-columns: 138px 50px 79px 62px;
  padding: 0 0 0 3px;
  align-items: center;
}
.f-lbl {
  letter-spacing: -1px;
}
.f-track i {
  display: block;
  background: #00e600;
}
.f-val {
  text-align: right;
}
.f-pct {
  text-align: right;
}
.t-row {
  height: 27.1px;
  line-height: 27px;
  display: grid;
  grid-template-columns: 103px 70px 73px 17px 1fr;
  padding: 0 4px 0 3px;
}
.t-vol {
  text-align: right;
}
.t-side {
  padding-left: 17px;
  width: 20px;
}
.t-cnt {
  text-align: right;
}
.sidebar {
  flex: 1;
  background: #f0f0f0;
  display: flex;
  flex-direction: column;
  align-items: center;
  padding-top: 5px;
}
.ic {
  width: 28px;
  height: 24px;
  flex: none;
  margin-bottom: 9px;
}
.ib {
  width: 28px;
  height: 24px;
  flex: none;
  margin-bottom: 9px;
  box-sizing: border-box;
  text-align: center;
  line-height: 20px;
  font-size: 14px;
  letter-spacing: -0.5px;
  background: #fff;
  border: 2px solid #5a9bea;
  overflow: hidden;
  white-space: nowrap;
}
.ib.blue {
  color: #2a6fc0;
}
.ib.orange {
  color: #e87a20;
  font-weight: 700;
  font-size: 16px;
}
.ib.teal {
  color: #1a5fb4;
  border-color: #3aa08a;
  border-radius: 6px;
  font-size: 13px;
  font-style: italic;
}
.ib.plain {
  background: none;
  border: none;
}
.rsi {
  color: #3a50c0;
  font-weight: 700;
  font-size: 16px;
  line-height: 24px;
}
.sb-sep {
  width: 28px;
  height: 0;
  margin: 2px 0 9px;
  border: 0;
  border-top: 1px solid #aaa;
  flex: none;
}
.per {
  width: 36px;
  height: 33px;
  flex: none;
  line-height: 33px;
  text-align: center;
  font-size: 17px;
  color: #1a5fb4;
}
.per.active {
  background: #fafafa;
  border: 1px solid #aaa;
  border-right: none;
  box-sizing: border-box;
}
.status {
  flex: 1;
  display: flex;
  align-items: baseline;
  background: #f2f2f2;
  padding: 2px 0 0 2px;
  overflow: hidden;
}
.st-icon {
  margin-right: 3px;
  align-self: center;
}
.st-cell {
  flex: none;
  font-size: 20px;
  font-weight: 700;
  white-space: nowrap;
  line-height: 30px;
}
.st-cell.lab {
  font-size: 24px;
  font-weight: 400;
  color: #222;
}
.st-cell.up {
  color: #f00;
}
.st-cell.amt {
  color: #111;
}
.st-cell em {
  font-size: 24px;
  color: #333;
}
.ime {
  position: absolute;
  left: 1730px;
  top: 1229px;
  width: 158px;
  height: 25px;
  display: flex;
  align-items: center;
  gap: 2px;
  padding: 1px;
  box-sizing: border-box;
  background: #d6d3cb;
  border: 1px solid #fff;
  color: #111;
  font-size: 17px;
}
.ime-a {
  width: 20px;
  text-align: center;
  color: #900;
  font-family: "Liberation Serif", serif;
  font-weight: 700;
  font-size: 18px;
  border: 1px solid #999;
}
.ime-name {
  width: 70px;
  text-align: center;
  white-space: nowrap;
  border: 1px solid #999;
}
.ime-btn {
  width: 20px;
  height: 21px;
  display: flex;
  align-items: center;
  justify-content: center;
  border: 1px solid #999;
}
.watermark {
  position: absolute;
  left: 1080px;
  top: 1286px;
  width: 1080px;
  height: 109px;
  display: flex;
  align-items: center;
  background: #80abd8;
}
.wm-cn {
  margin-left: 20px;
  width: 416px;
  font-size: 80px;
  font-weight: 900;
  letter-spacing: -4px;
  color: #1a0f8a;
  white-space: nowrap;
}
.wm-logo {
  flex: none;
}
.wm-en {
  margin-left: 38px;
  font-family: "DejaVu Serif", serif;
  font-weight: 700;
  font-size: 71px;
  letter-spacing: -1.5px;
  color: #fff;
  white-space: nowrap;
}
</style>
